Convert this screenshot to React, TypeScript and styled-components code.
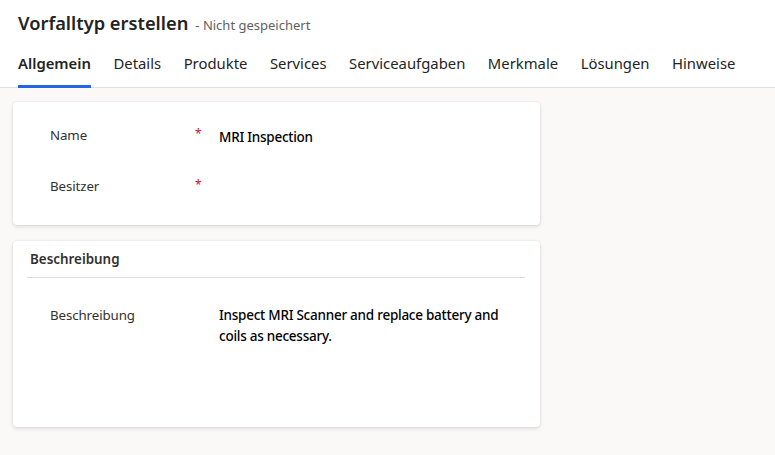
import React from "react";
import styled, { createGlobalStyle } from "styled-components";

const Global = createGlobalStyle`
  html, body { margin: 0; padding: 0; background: #ffffff; }
  body { font-family: "Noto Sans", "Open Sans", sans-serif; color: #242424; }
  #root { min-height: 455px; display: flex; flex-direction: column; }
`;

const Page = styled.div`
  display: flex;
  flex-direction: column;
  min-height: 455px;
  background: #faf9f8;
`;

const Header = styled.header`
  background: #ffffff;
  border-bottom: 1px solid #e0e0e0;
  padding: 10px 0 0 18px;
`;

const TitleRow = styled.div`
  display: flex;
  align-items: baseline;
  gap: 7px;
  height: 29px;
`;

const Title = styled.h1`
  margin: 0;
  font-size: 18.3px;
  font-weight: 600;
  color: #242424;
`;

const Subtitle = styled.span`
  font-size: 13px;
  color: #616161;
`;

const Tabs = styled.nav`
  display: flex;
  gap: 22.5px;
  margin-top: 10px;
`;

const Tab = styled.div<{ $active?: boolean }>`
  font-size: 14.85px;
  font-weight: ${(p) => (p.$active ? 600 : 400)};
  color: #242424;
  padding: 4px 0 12px;
  border-bottom: 3px solid ${(p) => (p.$active ? "#2266e3" : "transparent")};
  margin-bottom: -1px;
`;

const Content = styled.main`
  display: flex;
  flex-direction: column;
  gap: 16px;
  padding: 14px 0 0 13px;
`;

const Card = styled.section<{ $height: number }>`
  width: 527px;
  height: ${(p) => p.$height}px;
  box-sizing: border-box;
  background: #ffffff;
  border-radius: 4px;
  box-shadow: 0 0 2px rgba(0, 0, 0, 0.12), 0 2px 4px rgba(0, 0, 0, 0.1);
  padding: 0 15px 0 14px;
`;

const SectionTitle = styled.h2`
  margin: 0;
  font-size: 13.4px;
  font-weight: 600;
  color: #323130;
  height: 36px;
  line-height: 37px;
  padding-left: 3px;
  border-bottom: 1px solid #e1dfdd;
`;

const Fields = styled.div<{ $top: number }>`
  display: flex;
  flex-direction: column;
  padding-top: ${(p) => p.$top}px;
`;

const Field = styled.div`
  display: grid;
  grid-template-columns: 145px 24px 1fr;
  padding-left: 23px;
  min-height: 51px;
`;

const Label = styled.div`
  font-size: 13.3px;
  letter-spacing: -0.1px;
  color: #323130;
  line-height: 20px;
`;

const Required = styled.span`
  font-size: 12px;
  color: #c50f1f;
  line-height: 18px;
`;

const Value = styled.div<{ $offset?: number }>`
  font-size: 13.5px;
  font-weight: 500;
  letter-spacing: -0.25px;
  color: #000000;
  line-height: 21px;
  padding-top: ${(p) => p.$offset ?? 0}px;
  max-width: 285px;
`;

const tabs = [
  "Allgemein",
  "Details",
  "Produkte",
  "Services",
  "Serviceaufgaben",
  "Merkmale",
  "Lösungen",
  "Hinweise",
];

export default function App() {
  return (
    <Page>
      <Global />
      <Header>
        <TitleRow>
          <Title>Vorfalltyp erstellen</Title>
          <Subtitle>- Nicht gespeichert</Subtitle>
        </TitleRow>
        <Tabs>
          {tabs.map((t, i) => (
            <Tab key={t} $active={i === 0}>
              {t}
            </Tab>
          ))}
        </Tabs>
      </Header>
      <Content>
        <Card $height={123}>
          <Fields $top={23}>
            <Field>
              <Label>Name</Label>
              <Required>*</Required>
              <Value $offset={2}>MRI Inspection</Value>
            </Field>
            <Field>
              <Label>Besitzer</Label>
              <Required>*</Required>
              <Value />
            </Field>
          </Fields>
        </Card>
        <Card $height={186}>
          <SectionTitle>Beschreibung</SectionTitle>
          <Fields $top={27}>
            <Field>
              <Label>Beschreibung</Label>
              <span />
              <Value>Inspect MRI Scanner and replace battery and coils as necessary.</Value>
            </Field>
          </Fields>
        </Card>
      </Content>
    </Page>
  );
}
